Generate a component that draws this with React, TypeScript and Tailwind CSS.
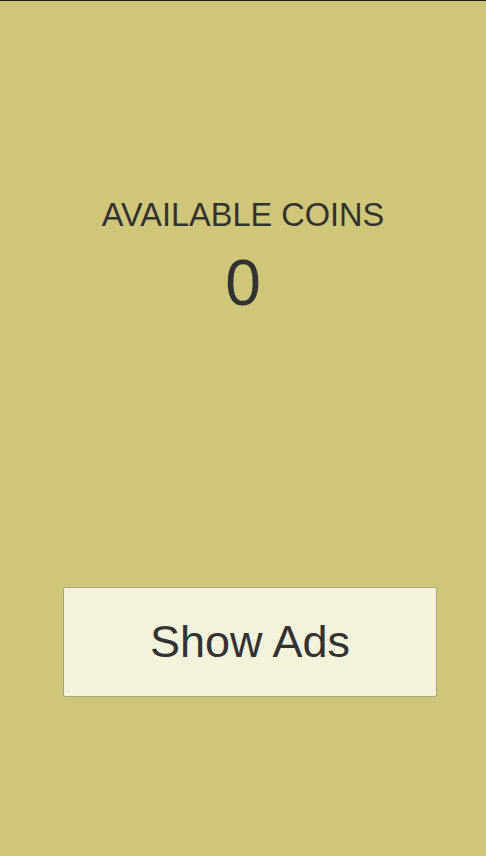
export default function App() {
  return (
    <div
      className="h-[856px] w-full overflow-hidden border-t border-[#1e1e1e] bg-[#d0c679] text-[#323232]"
      style={{ fontFamily: '"Liberation Sans", Arial, sans-serif' }}
    >
      {/* Coins */}
      <div className="mt-[198px] flex flex-col items-center">
        <div className="text-[32.5px] leading-none">AVAILABLE COINS</div>
        <div className="mt-[19px] text-[64px] leading-none">0</div>
      </div>

      {/* Button */}
      <button
        type="button"
        className="ml-[63px] mt-[272px] flex h-[110px] w-[374px] items-center justify-center rounded-[2px] border border-[#aaa483] bg-[#f4f2db] text-[45px] leading-none text-[#323232]"
      >
        Show Ads
      </button>
    </div>
  );
}
